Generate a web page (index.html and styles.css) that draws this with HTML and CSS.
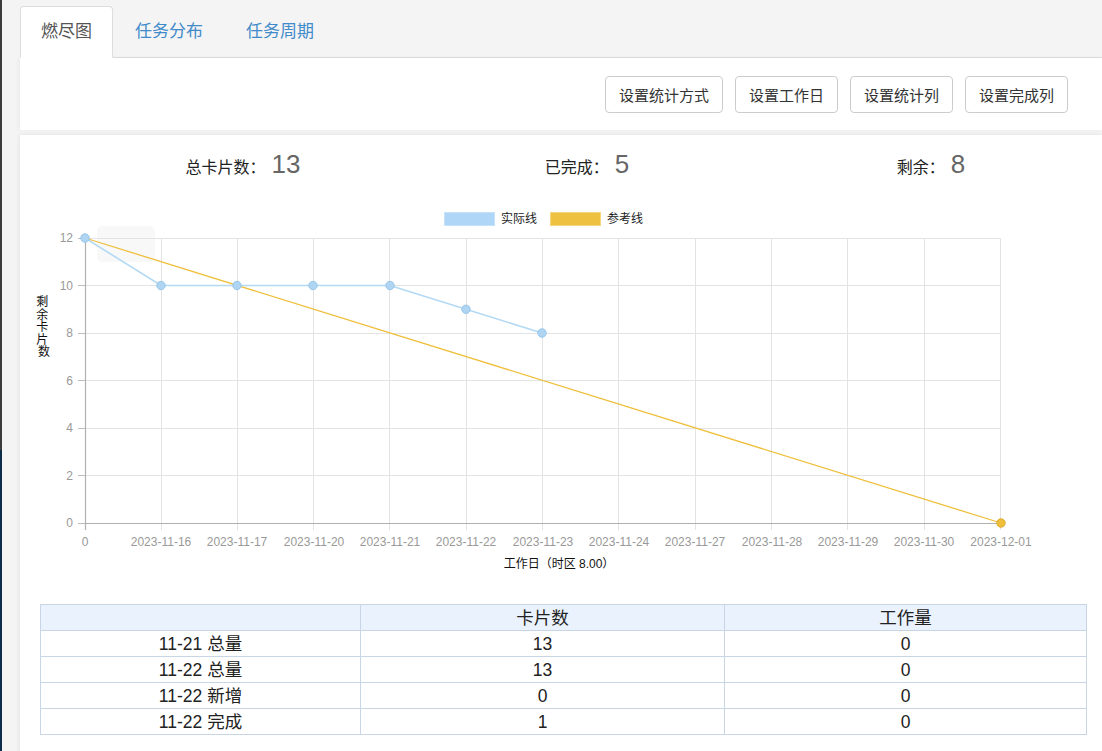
FILE: index.html
```html
<!DOCTYPE html>
<html lang="zh-CN">
<head>
<meta charset="utf-8">
<title>燃尽图</title>
<link rel="stylesheet" href="styles.css">
</head>
<body>
<div class="edge"></div>
<main class="page">
  <nav class="tabs">
    <a class="tab active">燃尽图</a>
    <a class="tab">任务分布</a>
    <a class="tab">任务周期</a>
  </nav>
  <section class="toolbar">
    <button class="btn">设置统计方式</button>
    <button class="btn">设置工作日</button>
    <button class="btn">设置统计列</button>
    <button class="btn">设置完成列</button>
  </section>
  <section class="panel">
    <div class="stats">
      <div class="stat"><span class="label">总卡片数：</span><span class="num">13</span></div>
      <div class="stat"><span class="label">已完成：</span><span class="num">5</span></div>
      <div class="stat"><span class="label">剩余：</span><span class="num">8</span></div>
    </div>
    <svg class="chart" width="1082" height="390" viewBox="20 200 1082 390" xmlns="http://www.w3.org/2000/svg">
      <!-- legend -->
      <rect x="444.5" y="212.5" width="50" height="13" fill="#afd6f6" stroke="#c4e2f9"/>
      <text class="legend" x="501" y="223">实际线</text>
      <rect x="550.5" y="212.5" width="50" height="13" fill="#efc141" stroke="#f5d67e"/>
      <text class="legend" x="607" y="223">参考线</text>

      <!-- faint tooltip remnant -->
      <rect x="97" y="226" width="58" height="36" rx="5" fill="#f8f8f8"/>

      <!-- horizontal grid -->
      <g stroke="#e3e3e3" stroke-width="1">
        <line x1="85" y1="238.5" x2="1001" y2="238.5"/>
        <line x1="85" y1="285.5" x2="1001" y2="285.5"/>
        <line x1="85" y1="333.5" x2="1001" y2="333.5"/>
        <line x1="85" y1="380.5" x2="1001" y2="380.5"/>
        <line x1="85" y1="428.5" x2="1001" y2="428.5"/>
        <line x1="85" y1="475.5" x2="1001" y2="475.5"/>
      </g>
      <!-- vertical grid (extends below axis as ticks) -->
      <g stroke="#e3e3e3" stroke-width="1">
        <line x1="161.5" y1="238" x2="161.5" y2="530"/>
        <line x1="237.5" y1="238" x2="237.5" y2="530"/>
        <line x1="313.5" y1="238" x2="313.5" y2="530"/>
        <line x1="389.5" y1="238" x2="389.5" y2="530"/>
        <line x1="466.5" y1="238" x2="466.5" y2="530"/>
        <line x1="542.5" y1="238" x2="542.5" y2="530"/>
        <line x1="618.5" y1="238" x2="618.5" y2="530"/>
        <line x1="695.5" y1="238" x2="695.5" y2="530"/>
        <line x1="771.5" y1="238" x2="771.5" y2="530"/>
        <line x1="847.5" y1="238" x2="847.5" y2="530"/>
        <line x1="924.5" y1="238" x2="924.5" y2="530"/>
        <line x1="1000.5" y1="238" x2="1000.5" y2="530"/>
      </g>
      <!-- y ticks -->
      <g stroke="#bdbdbd" stroke-width="1">
        <line x1="78" y1="238.5" x2="85" y2="238.5"/>
        <line x1="78" y1="285.5" x2="85" y2="285.5"/>
        <line x1="78" y1="333.5" x2="85" y2="333.5"/>
        <line x1="78" y1="380.5" x2="85" y2="380.5"/>
        <line x1="78" y1="428.5" x2="85" y2="428.5"/>
        <line x1="78" y1="475.5" x2="85" y2="475.5"/>
        <line x1="78" y1="523.5" x2="85" y2="523.5"/>
      </g>
      <!-- axes -->
      <line x1="85" y1="523.5" x2="1001" y2="523.5" stroke="#b0b0b0" stroke-width="1.2"/>
      <line x1="85.5" y1="238" x2="85.5" y2="530" stroke="#b0b0b0" stroke-width="1.2"/>

      <!-- y labels -->
      <g class="tick" text-anchor="end">
        <text x="73" y="242">12</text>
        <text x="73" y="289.5">10</text>
        <text x="73" y="337">8</text>
        <text x="73" y="384.5">6</text>
        <text x="73" y="432">4</text>
        <text x="73" y="479.5">2</text>
        <text x="73" y="527">0</text>
      </g>
      <!-- x labels -->
      <g class="tick" text-anchor="middle">
        <text x="85" y="546">0</text>
        <text x="161" y="546">2023-11-16</text>
        <text x="237" y="546">2023-11-17</text>
        <text x="314" y="546">2023-11-20</text>
        <text x="390" y="546">2023-11-21</text>
        <text x="466" y="546">2023-11-22</text>
        <text x="543" y="546">2023-11-23</text>
        <text x="619" y="546">2023-11-24</text>
        <text x="695" y="546">2023-11-27</text>
        <text x="772" y="546">2023-11-28</text>
        <text x="848" y="546">2023-11-29</text>
        <text x="924" y="546">2023-11-30</text>
        <text x="1001" y="546">2023-12-01</text>
      </g>

      <!-- axis titles -->
      <text class="title" text-anchor="middle">
        <tspan x="44" y="306">剩</tspan>
        <tspan x="44" y="318.5">余</tspan>
        <tspan x="44" y="331">卡</tspan>
        <tspan x="44" y="343.5">片</tspan>
        <tspan x="44" y="356">数</tspan>
      </text>
      <text class="title" x="559" y="568" text-anchor="middle">工作日（时区 8.00）</text>

      <!-- reference line -->
      <line x1="85" y1="238" x2="1001" y2="523" stroke="#efbf3c" stroke-width="1.3"/>
      <!-- actual line -->
      <polyline points="85,238 161,285.5 237,285.5 313,285.5 390,285.5 466,309.3 542,333" fill="none" stroke="#b3d9f5" stroke-width="1.6"/>
      <g fill="#afd5f3" stroke="#98c6ea" stroke-width="1">
        <circle cx="85" cy="238" r="4.2"/>
        <circle cx="161" cy="285.5" r="4.2"/>
        <circle cx="237" cy="285.5" r="4.2"/>
        <circle cx="313" cy="285.5" r="4.2"/>
        <circle cx="390" cy="285.5" r="4.2"/>
        <circle cx="466" cy="309.3" r="4.2"/>
        <circle cx="542" cy="333" r="4.2"/>
      </g>
      <circle cx="1001" cy="523" r="4.2" fill="#efbf3c" stroke="#dcab2c" stroke-width="1"/>
    </svg>
    <table class="summary">
      <colgroup>
        <col class="c1"><col class="c2"><col class="c3">
      </colgroup>
      <thead>
        <tr><th></th><th>卡片数</th><th>工作量</th></tr>
      </thead>
      <tbody>
        <tr><td>11-21 总量</td><td>13</td><td>0</td></tr>
        <tr><td>11-22 总量</td><td>13</td><td>0</td></tr>
        <tr><td>11-22 新增</td><td>0</td><td>0</td></tr>
        <tr><td>11-22 完成</td><td>1</td><td>0</td></tr>
      </tbody>
    </table>
  </section>
</main>
</body>
</html>
```
FILE: styles.css
```css
* { box-sizing: border-box; }

html, body {
  margin: 0;
  padding: 0;
  height: 751px;
  overflow: hidden;
}

body {
  display: flex;
  background: #f4f4f4;
  font-family: "Liberation Sans", "Noto Sans CJK SC", sans-serif;
  color: #333;
}

.edge {
  width: 2px;
  flex: 0 0 2px;
  background: linear-gradient(to bottom, #3c3c3c 0, #3c3c3c 450px, #0c2c49 450px, #0c2c49 100%);
}

.page {
  flex: 1;
  margin-left: 18px;
  min-width: 0;
}

.tabs {
  display: flex;
  height: 58px;
  padding-top: 6px;
  border-bottom: 1px solid #dddddd;
}

.tab {
  display: block;
  height: 52px;
  line-height: 50px;
  padding: 0 20px;
  margin-right: 1px;
  margin-bottom: -1px;
  font-size: 17px;
  color: #428bca;
  border: 1px solid transparent;
  border-radius: 4px 4px 0 0;
}

.tab.active {
  background: #ffffff;
  color: #555555;
  border-color: #dddddd;
  border-bottom-color: #ffffff;
}

.toolbar {
  display: flex;
  justify-content: flex-end;
  align-items: center;
  gap: 12px;
  height: 72px;
  padding-right: 34px;
  background: #ffffff;
  box-shadow: -2px 0 4px rgba(0,0,0,0.04);
}

.btn {
  height: 37px;
  padding: 0 13px;
  font-family: "Liberation Sans", "Noto Sans CJK SC", sans-serif;
  font-size: 15px;
  color: #333333;
  background: #ffffff;
  border: 1px solid #cccccc;
  border-radius: 4px;
}

.panel {
  margin-top: 5px;
  background: #ffffff;
  height: 620px;
  box-shadow: -2px 0 4px rgba(0,0,0,0.04), 0 -1px 3px rgba(0,0,0,0.03);
}

.stats {
  display: grid;
  grid-template-columns: repeat(3, 344px);
  padding-left: 51px;
  padding-top: 13px;
  height: 60px;
}

.stat {
  text-align: center;
  line-height: 32px;
  white-space: nowrap;
}

.label {
  font-size: 16px;
  color: #222222;
}

.num {
  font-size: 26px;
  color: #666666;
  margin-left: 6px;
}

.chart {
  display: block;
  margin-top: 5px;
}

.legend {
  font-size: 12px;
  fill: #222222;
  font-family: "Liberation Sans", "Noto Sans CJK SC", sans-serif;
}

.tick text {
  font-size: 12px;
  fill: #999999;
  font-family: "Liberation Sans", "Noto Sans CJK SC", sans-serif;
}

.title {
  font-size: 12px;
  fill: #111111;
  font-family: "Liberation Sans", "Noto Sans CJK SC", sans-serif;
}

.summary {
  margin: 14px 0 0 20px;
  width: 1046px;
  border-collapse: collapse;
  table-layout: fixed;
  font-size: 17.5px;
  color: #222222;
}

.summary .c1 { width: 320px; }
.summary .c2 { width: 364px; }
.summary .c3 { width: 362px; }

.summary th,
.summary td {
  height: 26px;
  padding: 0;
  text-align: center;
  font-weight: normal;
  border: 1px solid #c8d5e5;
  line-height: 24px;
}

.summary thead th {
  background: #eaf2fd;
}
```
